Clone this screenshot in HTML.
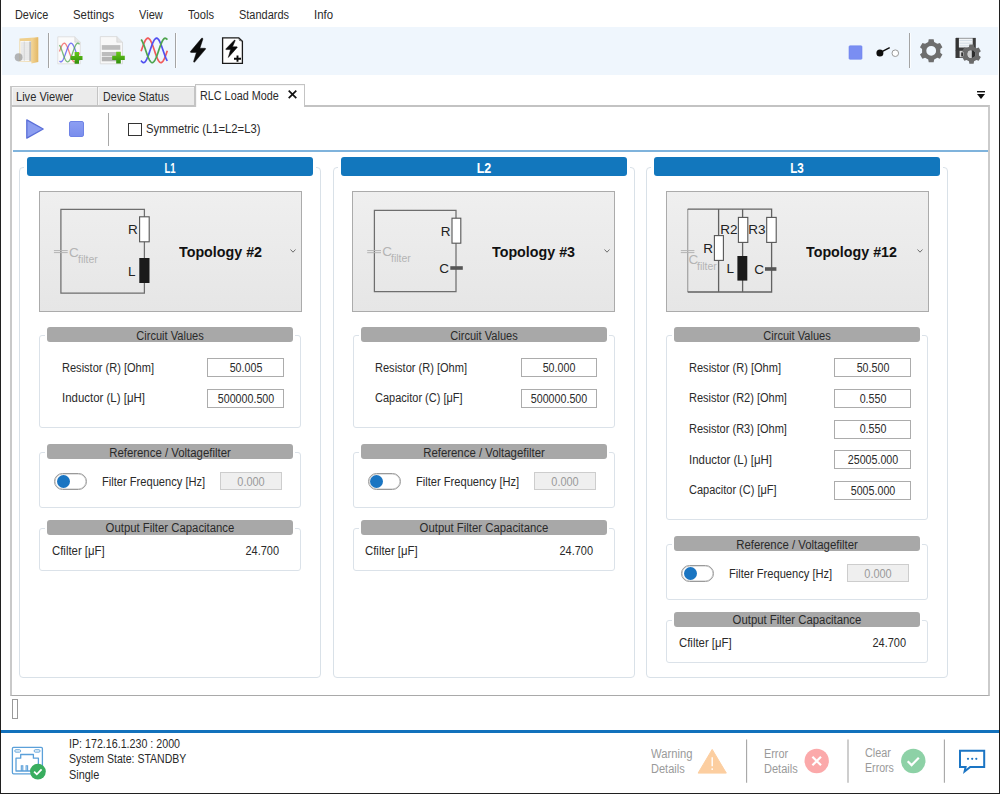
<!DOCTYPE html>
<html><head><meta charset="utf-8"><style>
*{box-sizing:border-box;margin:0;padding:0}
html,body{width:1000px;height:794px;overflow:hidden;background:#fff}
body{position:relative;font-family:"Liberation Sans",sans-serif;font-size:12px;color:#2a2a2a}
.a{position:absolute}
.t{position:absolute;white-space:nowrap;line-height:1}
.tab{position:absolute;border:1px solid #c4c4c4;border-bottom:none;background:#ebebeb;box-shadow:inset 1px 1px 0 #f6f6f6}
.hdr{position:absolute;height:19px;background:#1277bd;border-radius:3px;box-shadow:0 0 0 3px #fff}
.grp{position:absolute;border:1px solid #d9e1e8;border-radius:4px}
.topo{position:absolute;border:1px solid #ababab;background:linear-gradient(#efefef,#e6e6e6)}
.ghdr{position:absolute;height:15px;background:#a8a8a8;border-radius:3px;box-shadow:0 0 0 2px #fff}
.sgrp{position:absolute;border:1px solid #dbe2e9;border-radius:3px}
.tb{position:absolute;height:19px;border:1px solid #acacac;background:#fff}
.tbd{background:#efefef;border-color:#cdcdcd}
.sw{position:absolute;width:33px;height:17px;border:1px solid #9a9a9a;border-radius:9px;background:#fff;box-shadow:inset 0 0 0 0.6px #c4c4c4}
.knob{position:absolute;left:1.6px;top:1.4px;width:13px;height:13px;border-radius:50%;background:#1a75c2}
svg{position:absolute;overflow:visible}
.sch text{font-family:"Liberation Sans",sans-serif}
</style></head><body>
<div class="a" style="left:0;top:0;width:1px;height:794px;background:#202020"></div>
<div class="a" style="left:999px;top:0;width:1px;height:794px;background:#202020"></div>
<div class="a" style="left:0;top:793px;width:1000px;height:1px;background:#202020"></div>
<div class="t" style="top:8.84px;font-size:12px;left:14.75px;transform:scaleX(0.9048);transform-origin:0 0;">Device</div>
<div class="t" style="top:8.84px;font-size:12px;left:73.00px;transform:scaleX(0.9480);transform-origin:0 0;">Settings</div>
<div class="t" style="top:8.84px;font-size:12px;left:139.00px;transform:scaleX(0.9231);transform-origin:0 0;">View</div>
<div class="t" style="top:8.84px;font-size:12px;left:188.00px;transform:scaleX(0.9286);transform-origin:0 0;">Tools</div>
<div class="t" style="top:8.84px;font-size:12px;left:239.00px;transform:scaleX(0.9132);transform-origin:0 0;">Standards</div>
<div class="t" style="top:8.84px;font-size:12px;left:314.00px;transform:scaleX(0.9500);transform-origin:0 0;">Info</div>
<div class="a" style="left:2px;top:27px;width:996px;height:48px;background:#eff6fd"></div>
<div class="a" style="left:48px;top:33px;width:1px;height:35px;background:#a4a4a4"></div>
<div class="a" style="left:49px;top:33px;width:1px;height:35px;background:#fbfdff"></div>
<div class="a" style="left:175px;top:33px;width:1px;height:35px;background:#a4a4a4"></div>
<div class="a" style="left:176px;top:33px;width:1px;height:35px;background:#fbfdff"></div>
<div class="a" style="left:909px;top:33px;width:1px;height:35px;background:#a4a4a4"></div>
<div class="a" style="left:910px;top:33px;width:1px;height:35px;background:#fbfdff"></div>
<svg style="left:0;top:0" width="1" height="1"><defs><linearGradient id="fg" x1="0" y1="0" x2="1" y2="0"><stop offset="0" stop-color="#f3d597"/><stop offset="1" stop-color="#e3b866"/></linearGradient><linearGradient id="pl" x1="0" y1="0" x2="0" y2="1"><stop offset="0" stop-color="#68c81a"/><stop offset="1" stop-color="#2f8e0c"/></linearGradient></defs><path d="M19.5 38.6 L38.2 37.2 V62 L19.5 61.4Z" fill="#efcf8c"/><path d="M20.2 41 H31.2 V61.2 H20.2Z" fill="#f7f7f7"/><path d="M21 43.0H30.5M21 45.0H30.5M21 47.0H30.5M21 49.0H30.5M21 51.0H30.5M21 53.0H30.5M21 55.0H30.5M21 57.0H30.5M21 59.0H30.5" stroke="#d6d6d6" stroke-width="0.8"/><path d="M24.3 41.5V60.8" stroke="#d0d0d0" stroke-width="0.8"/><rect x="29.3" y="41.5" width="2" height="19.5" fill="#a9a9a9" opacity="0.7"/><path d="M31.4 38.4 L38.2 37.2 V62 L31.4 63.4Z" fill="url(#fg)"/><ellipse cx="18.6" cy="57.3" rx="3.9" ry="4.1" fill="#9e9e9e" opacity="0.75"/><path d="M57.8 36.8 H74.8 L80.3 42.2 V63.8 H57.8Z" fill="#fbfbfb" stroke="#dadada" stroke-width="0.8"/><path d="M74.8 36.8 V42.2 H80.3" fill="#e6e6e6" stroke="#d0d0d0" stroke-width="0.6"/><path d="M59.50 51.50 L59.83 50.56 L60.17 49.64 L60.50 48.74 L60.83 47.89 L61.17 47.09 L61.50 46.34 L61.83 45.66 L62.17 45.05 L62.50 44.52 L62.83 44.07 L63.17 43.71 L63.50 43.45 L63.83 43.28 L64.17 43.20 L64.50 43.23 L64.83 43.35 L65.17 43.57 L65.50 43.88 L65.83 44.28 L66.17 44.77 L66.50 45.35 L66.83 45.99 L67.17 46.71 L67.50 47.48 L67.83 48.31 L68.17 49.19 L68.50 50.09 L68.83 51.03 L69.17 51.98 L69.50 52.93 L69.83 53.88 L70.17 54.81 L70.50 55.73 L70.83 56.60 L71.17 57.44 L71.50 58.22 L71.83 58.94 L72.17 59.59 L72.50 60.17 L72.83 60.67 L73.17 61.08 L73.50 61.40 L73.83 61.63 L74.17 61.76 L74.50 61.80 L74.83 61.74 L75.17 61.57 L75.50 61.32 L75.83 60.97 L76.17 60.53 L76.50 60.01 L76.83 59.40 L77.17 58.73 L77.50 57.99 L77.83 57.19 L78.17 56.34 L78.50 55.46 L78.83 54.54 L79.17 53.60 L79.50 52.64" fill="none" stroke="#f25a5a" stroke-width="1.3" opacity="0.75"/><path d="M59.50 61.01 L59.83 61.35 L60.17 61.59 L60.50 61.75 L60.83 61.80 L61.17 61.76 L61.50 61.61 L61.83 61.38 L62.17 61.05 L62.50 60.62 L62.83 60.12 L63.17 59.53 L63.50 58.87 L63.83 58.14 L64.17 57.36 L64.50 56.52 L64.83 55.64 L65.17 54.72 L65.50 53.78 L65.83 52.83 L66.17 51.88 L66.50 50.93 L66.83 50.00 L67.17 49.10 L67.50 48.23 L67.83 47.40 L68.17 46.63 L68.50 45.92 L68.83 45.28 L69.17 44.72 L69.50 44.24 L69.83 43.85 L70.17 43.54 L70.50 43.33 L70.83 43.22 L71.17 43.21 L71.50 43.29 L71.83 43.47 L72.17 43.74 L72.50 44.11 L72.83 44.57 L73.17 45.11 L73.50 45.72 L73.83 46.41 L74.17 47.17 L74.50 47.97 L74.83 48.83 L75.17 49.73 L75.50 50.65 L75.83 51.59 L76.17 52.55 L76.50 53.50 L76.83 54.44 L77.17 55.36 L77.50 56.26 L77.83 57.11 L78.17 57.91 L78.50 58.66 L78.83 59.34 L79.17 59.95 L79.50 60.48" fill="none" stroke="#5050f0" stroke-width="1.3" opacity="0.75"/><path d="M59.50 44.99 L59.83 45.60 L60.17 46.27 L60.50 47.01 L60.83 47.81 L61.17 48.66 L61.50 49.54 L61.83 50.46 L62.17 51.40 L62.50 52.36 L62.83 53.31 L63.17 54.26 L63.50 55.18 L63.83 56.08 L64.17 56.94 L64.50 57.76 L64.83 58.51 L65.17 59.21 L65.50 59.83 L65.83 60.38 L66.17 60.85 L66.50 61.22 L66.83 61.51 L67.17 61.70 L67.50 61.79 L67.83 61.79 L68.17 61.68 L68.50 61.48 L68.83 61.19 L69.17 60.80 L69.50 60.33 L69.83 59.78 L70.17 59.14 L70.50 58.44 L70.83 57.68 L71.17 56.86 L71.50 55.99 L71.83 55.09 L72.17 54.16 L72.50 53.22 L72.83 52.26 L73.17 51.31 L73.50 50.37 L73.83 49.45 L74.17 48.57 L74.50 47.73 L74.83 46.93 L75.17 46.20 L75.50 45.53 L75.83 44.94 L76.17 44.42 L76.50 43.99 L76.83 43.65 L77.17 43.41 L77.50 43.25 L77.83 43.20 L78.17 43.24 L78.50 43.39 L78.83 43.62 L79.17 43.95 L79.50 44.38" fill="none" stroke="#4ea44e" stroke-width="1.3" opacity="0.75"/><path d="M74.6 52 H79 V56 H82.5 V60 H79 V63.8 H74.6 V60 H70.8 V56 H74.6Z" fill="url(#pl)"/><path d="M100.3 36.6 H116.8 L122.5 42.2 V63.8 H100.3Z" fill="#f8f8f8" stroke="#d6d6d6" stroke-width="0.8"/><path d="M116.8 36.6 V42.2 H122.5" fill="#e4e4e4" stroke="#cfcfcf" stroke-width="0.6"/><rect x="101.8" y="45.1" width="18.5" height="4.7" fill="#bdbdbd"/><rect x="101.8" y="52" width="18.5" height="4.3" fill="#bdbdbd"/><rect x="101.8" y="57" width="18.5" height="4.3" fill="#b5b5b5"/><path d="M116.2 51.8 H120.8 V55.8 H124.8 V59.9 H120.8 V63.6 H116.2 V59.9 H112.2 V55.8 H116.2Z" fill="url(#pl)"/><path d="M141.10 51.28 L141.54 50.00 L141.97 48.72 L142.41 47.45 L142.85 46.22 L143.28 45.04 L143.72 43.91 L144.16 42.86 L144.59 41.89 L145.03 41.02 L145.47 40.25 L145.90 39.59 L146.34 39.06 L146.78 38.65 L147.21 38.37 L147.65 38.22 L148.09 38.21 L148.52 38.34 L148.96 38.60 L149.40 38.99 L149.83 39.51 L150.27 40.15 L150.71 40.90 L151.14 41.76 L151.58 42.71 L152.02 43.76 L152.45 44.87 L152.89 46.05 L153.33 47.27 L153.76 48.53 L154.20 49.81 L154.64 51.10 L155.07 52.38 L155.51 53.63 L155.95 54.85 L156.38 56.03 L156.82 57.13 L157.26 58.17 L157.69 59.12 L158.13 59.97 L158.57 60.71 L159.00 61.34 L159.44 61.85 L159.88 62.23 L160.31 62.48 L160.75 62.59 L161.19 62.57 L161.62 62.41 L162.06 62.12 L162.50 61.70 L162.93 61.16 L163.37 60.49 L163.81 59.71 L164.24 58.83 L164.68 57.85 L165.12 56.80 L165.55 55.67 L165.99 54.48 L166.43 53.24 L166.86 51.98 L167.30 50.69" fill="none" stroke="#f25a5a" stroke-width="1.7" opacity="1.0"/><path d="M141.10 60.50 L141.54 61.16 L141.97 61.71 L142.41 62.13 L142.85 62.42 L143.28 62.57 L143.72 62.59 L144.16 62.48 L144.59 62.23 L145.03 61.85 L145.47 61.34 L145.90 60.71 L146.34 59.96 L146.78 59.11 L147.21 58.16 L147.65 57.13 L148.09 56.02 L148.52 54.85 L148.96 53.62 L149.40 52.37 L149.83 51.09 L150.27 49.80 L150.71 48.52 L151.14 47.26 L151.58 46.04 L152.02 44.86 L152.45 43.75 L152.89 42.71 L153.33 41.75 L153.76 40.89 L154.20 40.14 L154.64 39.50 L155.07 38.99 L155.51 38.60 L155.95 38.34 L156.38 38.21 L156.82 38.22 L157.26 38.37 L157.69 38.65 L158.13 39.06 L158.57 39.60 L159.00 40.25 L159.44 41.02 L159.88 41.90 L160.31 42.87 L160.75 43.92 L161.19 45.05 L161.62 46.23 L162.06 47.46 L162.50 48.72 L162.93 50.01 L163.37 51.29 L163.81 52.57 L164.24 53.82 L164.68 55.04 L165.12 56.20 L165.55 57.30 L165.99 58.32 L166.43 59.25 L166.86 60.09 L167.30 60.82" fill="none" stroke="#5050f0" stroke-width="1.7" opacity="1.0"/><path d="M141.10 39.42 L141.54 40.04 L141.97 40.78 L142.41 41.62 L142.85 42.56 L143.28 43.59 L143.72 44.70 L144.16 45.86 L144.59 47.08 L145.03 48.34 L145.47 49.61 L145.90 50.90 L146.34 52.18 L146.78 53.44 L147.21 54.67 L147.65 55.85 L148.09 56.97 L148.52 58.02 L148.96 58.98 L149.40 59.84 L149.83 60.60 L150.27 61.25 L150.71 61.78 L151.14 62.18 L151.58 62.45 L152.02 62.58 L152.45 62.58 L152.89 62.45 L153.33 62.18 L153.76 61.78 L154.20 61.25 L154.64 60.60 L155.07 59.84 L155.51 58.97 L155.95 58.01 L156.38 56.96 L156.82 55.84 L157.26 54.66 L157.69 53.43 L158.13 52.17 L158.57 50.89 L159.00 49.60 L159.44 48.33 L159.88 47.07 L160.31 45.85 L160.75 44.69 L161.19 43.58 L161.62 42.56 L162.06 41.61 L162.50 40.77 L162.93 40.04 L163.37 39.42 L163.81 38.92 L164.24 38.55 L164.68 38.31 L165.12 38.20 L165.55 38.24 L165.99 38.40 L166.43 38.70 L166.86 39.13 L167.30 39.69" fill="none" stroke="#4ea44e" stroke-width="1.7" opacity="1.0"/><path d="M201.6 38.2 L190.4 51.6 Q190.2 52.5 191.3 52.5 L196.4 52.4 L193.6 61.5 Q193.7 62.6 194.6 62.1 L205.6 49.1 Q205.9 48.3 205 48.3 L199.9 48.2 L202.9 39 Q202.6 37.5 201.6 38.2Z" fill="#0a0a0a" stroke="#0a0a0a" stroke-width="0.5" stroke-linejoin="round"/><path d="M222.6 37.8 H238.8 L242.4 41.2 V63.3 H222.6Z" fill="#fff" stroke="#1a1a1a" stroke-width="1.3"/><path d="M238.8 38 L239.5 40.5 L242.2 41" fill="none" stroke="#444" stroke-width="0.8"/><path d="M234.3 40.2 L225.8 49 Q225.7 49.6 226.3 49.6 L230.6 49.5 L228.3 57.5 L237.2 47.4 Q237.4 46.8 236.8 46.8 L232.5 46.8 L235.2 40.6 Q235 39.8 234.3 40.2Z" fill="#0a0a0a" stroke="#0a0a0a" stroke-width="0.5" stroke-linejoin="round"/><path d="M234 58.8 H241 M237.5 55.4 V61.8" stroke="#0a0a0a" stroke-width="1.9"/><rect x="849" y="45.8" width="13" height="13.5" rx="1" fill="#7a8ef2" stroke="#6f84ee" stroke-width="0.6"/><circle cx="879.9" cy="52.9" r="3.5" fill="#0d0d0d"/><path d="M880.5 52.3 L889.7 47.6" stroke="#0d0d0d" stroke-width="1.5"/><circle cx="895.3" cy="53.2" r="3.3" fill="#fff" stroke="#9a9a9a" stroke-width="1"/><path d="M934.17 41.99 L933.66 39.26 L928.74 39.26 L928.23 41.99 L925.06 43.82 L922.44 42.90 L919.98 47.16 L922.08 48.97 L922.08 52.63 L919.98 54.44 L922.44 58.70 L925.06 57.78 L928.23 59.61 L928.74 62.34 L933.66 62.34 L934.17 59.61 L937.34 57.78 L939.96 58.70 L942.42 54.44 L940.32 52.63 L940.32 48.97 L942.42 47.16 L939.96 42.90 L937.34 43.82Z M936.10 50.80 A4.9 4.9 0 1 0 926.30 50.80 A4.9 4.9 0 1 0 936.10 50.80Z" fill="#6e6e6e" fill-rule="evenodd"/><path d="M955.7 37.9 H975.8 V50.6 H955.7Z" fill="#3c3c3c"/><path d="M955.7 37.9 H958.9 V58 H955.7Z" fill="#333"/><path d="M955.7 50 H966 V58 H955.7Z" fill="#3a3a3a"/><rect x="958.9" y="38.4" width="13.8" height="9.1" fill="#f1f4f7"/><path d="M959.5 40.5H972 M959.5 43.2H972 M959.5 45.8H972" stroke="#c9d4de" stroke-width="0.7"/><rect x="959.6" y="50.8" width="4.6" height="6.5" fill="#d6d6d6"/><rect x="961.2" y="52.4" width="2.2" height="4" fill="#333"/><path d="M974.04 46.94 L973.64 44.54 L969.36 44.54 L968.96 46.94 L966.57 48.32 L964.29 47.47 L962.15 51.17 L964.03 52.72 L964.03 55.48 L962.15 57.03 L964.29 60.73 L966.57 59.88 L968.96 61.26 L969.36 63.66 L973.64 63.66 L974.04 61.26 L976.43 59.88 L978.71 60.73 L980.85 57.03 L978.97 55.48 L978.97 52.72 L980.85 51.17 L978.71 47.47 L976.43 48.32Z M975.40 54.10 A3.9 3.9 0 1 0 967.60 54.10 A3.9 3.9 0 1 0 975.40 54.10Z" fill="#6a6a6a" fill-rule="evenodd"/><path d="M971.5 50.2 A3.9 3.9 0 0 1 971.5 58 Z" fill="#2c2c2c"/><path d="M971.5 50.2 A3.9 3.9 0 0 0 971.5 58 Z" fill="#cfcfcf"/></svg>
<div class="tab" style="left:10px;top:86px;width:88px;height:20px;border-left:2px solid #c8c8c8"></div>
<div class="tab" style="left:97px;top:86px;width:98px;height:20px"></div>
<div class="a" style="left:10px;top:105px;width:980px;height:591px;border-style:solid;border-color:#c3c3c3 #cbcbcb #a9a9a9 #c9c9c9;border-width:2px 2px 1px 2px;background:#fff"></div>
<div class="tab" style="left:195px;top:84px;width:110px;height:23px;background:#fff"></div>
<div class="t" style="top:90.84px;font-size:12px;left:16.00px;transform:scaleX(0.9231);transform-origin:0 0;">Live Viewer</div>
<div class="t" style="top:90.74px;font-size:12px;left:103.20px;transform:scaleX(0.8919);transform-origin:0 0;">Device Status</div>
<div class="t" style="top:90.04px;font-size:12px;left:200.00px;transform:scaleX(0.9006);transform-origin:0 0;">RLC Load Mode</div>
<svg style="left:288px;top:90px" width="9" height="9" viewBox="0 0 9 9"><path d="M0.7 0.7L8.3 8.1M8.3 0.7L0.7 8.1" stroke="#111" stroke-width="1.7"/></svg>
<svg style="left:977px;top:91px" width="8" height="8" viewBox="0 0 8 8"><rect x="0" y="0" width="8" height="1.4" fill="#111"/><path d="M0 3L8 3L4 8Z" fill="#111"/></svg>
<svg style="left:26px;top:119px" width="18" height="20" viewBox="0 0 18 20"><path d="M0.8 0.9L17.2 10L0.8 19.1Z" fill="#8c9ef0" stroke="#5a6ed8" stroke-width="1.3" stroke-linejoin="round"/></svg>
<div class="a" style="left:69.4px;top:121.4px;width:15px;height:15.4px;border-radius:2px;background:linear-gradient(#8c9ef2,#7a8eed);border:1px solid #6f83e6"></div>
<div class="a" style="left:107.5px;top:113px;width:1px;height:33px;background:#a8a8a8"></div>
<div class="a" style="left:128px;top:122.5px;width:14px;height:13px;border:1px solid #333;background:#fff"></div>
<div class="t" style="top:123.04px;font-size:12px;left:146.30px;transform:scaleX(0.9377);transform-origin:0 0;">Symmetric (L1=L2=L3)</div>
<div class="a" style="left:13px;top:150px;width:975px;height:2px;background:#7fb3dc"></div>
<div class="grp" style="left:19px;top:167px;width:302px;height:510.5px"></div>
<div class="hdr" style="left:27px;top:157px;width:286px"></div>
<div class="t" style="top:160.95px;font-size:14px;color:#fff;font-weight:bold;left:-29.60px;width:400px;text-align:center;transform:scaleX(0.6857);transform-origin:50% 0;">L1</div>
<div class="topo" style="left:38.5px;top:191px;width:263px;height:120.5px"></div>
<svg class="sch" style="left:0;top:0" width="1" height="1">
<path d="M144.4 209.3H60.9V293H144.4Z" fill="none" stroke="#6e6e6e" stroke-width="1.25"/>
<rect x="139.6" y="216.8" width="9.6" height="25" fill="#fff" stroke="#555" stroke-width="1.1"/>
<rect x="139.3" y="258" width="10.2" height="25" fill="#1a1a1a"/>
<path d="M53.9 250.6H67.7M53.9 252.6H67.7" stroke="#b4b4b4" stroke-width="1"/>
<text x="128" y="234" font-size="13.5" fill="#222">R</text>
<text x="128" y="275.5" font-size="13.5" fill="#222">L</text>
<text x="69" y="256.5" font-size="13.5" fill="#b4b4b4">C</text>
<text x="78" y="262.5" font-size="10.5" fill="#b4b4b4">filter</text>
</svg>
<div class="t" style="top:243.60px;font-size:15px;color:#111;font-weight:bold;left:178.70px;transform:scaleX(0.9520);transform-origin:0 0;">Topology #2</div>
<svg style="left:290.3px;top:249px" width="6" height="4" viewBox="0 0 6 4"><path d="M0.5 0.5L3 3.2L5.5 0.5" fill="none" stroke="#6e6e6e" stroke-width="1"/></svg>
<div class="sgrp" style="left:39px;top:335px;width:262px;height:92.50px"></div>
<div class="ghdr" style="left:47px;top:327.3px;width:246px"></div>
<div class="t" style="top:329.94px;font-size:12px;left:-29.80px;width:400px;text-align:center;transform:scaleX(0.9229);transform-origin:50% 0;">Circuit Values</div>
<div class="t" style="top:361.64px;font-size:12px;left:61.50px;transform:scaleX(0.9200);transform-origin:0 0;">Resistor (R) [Ohm]</div>
<div class="tb" style="left:207.4px;top:358.20px;width:76.5px"></div>
<div class="t" style="top:361.84px;font-size:12px;left:45.60px;width:400px;text-align:center;transform:scaleX(0.8900);transform-origin:50% 0;">50.005</div>
<div class="t" style="top:392.31px;font-size:12px;left:61.50px;transform:scaleX(0.9540);transform-origin:0 0;">Inductor (L) [μH]</div>
<div class="tb" style="left:207.4px;top:388.87px;width:76.5px"></div>
<div class="t" style="top:392.51px;font-size:12px;left:45.60px;width:400px;text-align:center;transform:scaleX(0.8900);transform-origin:50% 0;">500000.500</div>
<div class="sgrp" style="left:39px;top:452.00px;width:262px;height:55.5px"></div>
<div class="ghdr" style="left:47px;top:444.30px;width:246px"></div>
<div class="t" style="top:446.94px;font-size:12px;left:-29.80px;width:400px;text-align:center;transform:scaleX(0.9500);transform-origin:50% 0;">Reference / Voltagefilter</div>
<div class="sw" style="left:54px;top:472.60px"><div class="knob"></div></div>
<div class="t" style="top:476.44px;font-size:12px;left:102.00px;transform:scaleX(0.9265);transform-origin:0 0;">Filter Frequency [Hz]</div>
<div class="tb tbd" style="left:220px;top:472.30px;width:62px;height:18px"></div>
<div class="t" style="top:476.44px;font-size:12px;color:#9a9a9a;left:51.00px;width:400px;text-align:center;transform:scaleX(0.9133);transform-origin:50% 0;">0.000</div>
<div class="sgrp" style="left:39px;top:528.00px;width:262px;height:42.5px"></div>
<div class="ghdr" style="left:47px;top:520.20px;width:246px"></div>
<div class="t" style="top:521.94px;font-size:12px;left:-29.80px;width:400px;text-align:center;transform:scaleX(0.9463);transform-origin:50% 0;">Output Filter Capacitance</div>
<div class="t" style="top:545.14px;font-size:12px;left:51.80px;transform:scaleX(0.9477);transform-origin:0 0;">Cfilter [μF]</div>
<div class="t" style="top:545.14px;font-size:12px;left:-120.80px;width:400px;text-align:right;transform:scaleX(0.9143);transform-origin:100% 0;">24.700</div>
<div class="grp" style="left:333px;top:167px;width:302px;height:510.5px"></div>
<div class="hdr" style="left:340.5px;top:157px;width:286px"></div>
<div class="t" style="top:160.95px;font-size:14px;color:#fff;font-weight:bold;left:283.90px;width:400px;text-align:center;transform:scaleX(0.8939);transform-origin:50% 0;">L2</div>
<div class="topo" style="left:352.0px;top:191px;width:263px;height:120.5px"></div>
<svg class="sch" style="left:0;top:0" width="1" height="1">
<path d="M456 210.4H374.4V291.7H456Z" fill="none" stroke="#6e6e6e" stroke-width="1.25"/>
<rect x="452" y="218.2" width="8.8" height="25" fill="#fff" stroke="#555" stroke-width="1.1"/>
<rect x="450.3" y="266.2" width="12.5" height="3.6" fill="#555"/>
<path d="M367.2 250.6H381M367.2 252.7H381" stroke="#b4b4b4" stroke-width="1"/>
<text x="440.7" y="235.5" font-size="13.5" fill="#222">R</text>
<text x="439.3" y="272.6" font-size="13.5" fill="#222">C</text>
<text x="382.2" y="255.8" font-size="13.5" fill="#b4b4b4">C</text>
<text x="391" y="262.3" font-size="10.5" fill="#b4b4b4">filter</text>
</svg>
<div class="t" style="top:243.60px;font-size:15px;color:#111;font-weight:bold;left:492.20px;transform:scaleX(0.9520);transform-origin:0 0;">Topology #3</div>
<svg style="left:603.8px;top:249px" width="6" height="4" viewBox="0 0 6 4"><path d="M0.5 0.5L3 3.2L5.5 0.5" fill="none" stroke="#6e6e6e" stroke-width="1"/></svg>
<div class="sgrp" style="left:353px;top:335px;width:262px;height:92.50px"></div>
<div class="ghdr" style="left:360.5px;top:327.3px;width:246px"></div>
<div class="t" style="top:329.94px;font-size:12px;left:283.70px;width:400px;text-align:center;transform:scaleX(0.9229);transform-origin:50% 0;">Circuit Values</div>
<div class="t" style="top:361.64px;font-size:12px;left:375.00px;transform:scaleX(0.9200);transform-origin:0 0;">Resistor (R) [Ohm]</div>
<div class="tb" style="left:520.9px;top:358.20px;width:76.5px"></div>
<div class="t" style="top:361.84px;font-size:12px;left:359.10px;width:400px;text-align:center;transform:scaleX(0.8900);transform-origin:50% 0;">50.000</div>
<div class="t" style="top:392.31px;font-size:12px;left:375.00px;transform:scaleX(0.9162);transform-origin:0 0;">Capacitor (C) [μF]</div>
<div class="tb" style="left:520.9px;top:388.87px;width:76.5px"></div>
<div class="t" style="top:392.51px;font-size:12px;left:359.10px;width:400px;text-align:center;transform:scaleX(0.8900);transform-origin:50% 0;">500000.500</div>
<div class="sgrp" style="left:353px;top:452.00px;width:262px;height:55.5px"></div>
<div class="ghdr" style="left:360.5px;top:444.30px;width:246px"></div>
<div class="t" style="top:446.94px;font-size:12px;left:283.70px;width:400px;text-align:center;transform:scaleX(0.9500);transform-origin:50% 0;">Reference / Voltagefilter</div>
<div class="sw" style="left:367.5px;top:472.60px"><div class="knob"></div></div>
<div class="t" style="top:476.44px;font-size:12px;left:415.50px;transform:scaleX(0.9265);transform-origin:0 0;">Filter Frequency [Hz]</div>
<div class="tb tbd" style="left:533.5px;top:472.30px;width:62px;height:18px"></div>
<div class="t" style="top:476.44px;font-size:12px;color:#9a9a9a;left:364.50px;width:400px;text-align:center;transform:scaleX(0.9133);transform-origin:50% 0;">0.000</div>
<div class="sgrp" style="left:353px;top:528.00px;width:262px;height:42.5px"></div>
<div class="ghdr" style="left:360.5px;top:520.20px;width:246px"></div>
<div class="t" style="top:521.94px;font-size:12px;left:283.70px;width:400px;text-align:center;transform:scaleX(0.9463);transform-origin:50% 0;">Output Filter Capacitance</div>
<div class="t" style="top:545.14px;font-size:12px;left:365.30px;transform:scaleX(0.9477);transform-origin:0 0;">Cfilter [μF]</div>
<div class="t" style="top:545.14px;font-size:12px;left:192.70px;width:400px;text-align:right;transform:scaleX(0.9143);transform-origin:100% 0;">24.700</div>
<div class="grp" style="left:646px;top:167px;width:302px;height:510.5px"></div>
<div class="hdr" style="left:654px;top:157px;width:286px"></div>
<div class="t" style="top:160.95px;font-size:14px;color:#fff;font-weight:bold;left:597.40px;width:400px;text-align:center;transform:scaleX(0.8327);transform-origin:50% 0;">L3</div>
<div class="topo" style="left:665.5px;top:191px;width:263px;height:120.5px"></div>
<svg class="sch" style="left:0;top:0" width="1" height="1">
<path d="M687.7 209.1V292" fill="none" stroke="#a6a6a6" stroke-width="1.3"/>
<path d="M687.7 209.1H771.6V292H687.7 M718.6 209.1V292 M742.6 209.1V292" fill="none" stroke="#626262" stroke-width="1.3"/>
<rect x="714.4" y="235.6" width="9" height="24.8" fill="#fff" stroke="#555" stroke-width="1.1"/>
<rect x="738.4" y="217.4" width="9.4" height="25" fill="#fff" stroke="#555" stroke-width="1.1"/>
<rect x="737.4" y="256" width="9.9" height="24.6" fill="#1a1a1a"/>
<rect x="766.7" y="217.4" width="9.5" height="25" fill="#fff" stroke="#555" stroke-width="1.1"/>
<rect x="765" y="267.2" width="11.4" height="3.6" fill="#555"/>
<path d="M680.8 250.6H694.4M680.8 252.6H694.4" stroke="#b4b4b4" stroke-width="1"/>
<text x="703.3" y="252.5" font-size="13.5" fill="#222">R</text>
<text x="720.2" y="233.5" font-size="13.5" fill="#222">R2</text>
<text x="748.2" y="233.5" font-size="13.5" fill="#222">R3</text>
<text x="726.5" y="272.6" font-size="13.5" fill="#222">L</text>
<text x="754.2" y="273.7" font-size="13.5" fill="#222">C</text>
<text x="688.4" y="263.6" font-size="13.5" fill="#b4b4b4">C</text>
<text x="697" y="269.8" font-size="10.5" fill="#b4b4b4">filter</text>
</svg>
<div class="t" style="top:243.60px;font-size:15px;color:#111;font-weight:bold;left:805.50px;transform:scaleX(0.9516);transform-origin:0 0;">Topology #12</div>
<svg style="left:917.3px;top:249px" width="6" height="4" viewBox="0 0 6 4"><path d="M0.5 0.5L3 3.2L5.5 0.5" fill="none" stroke="#6e6e6e" stroke-width="1"/></svg>
<div class="sgrp" style="left:666px;top:335px;width:262px;height:184.51px"></div>
<div class="ghdr" style="left:674px;top:327.3px;width:246px"></div>
<div class="t" style="top:329.94px;font-size:12px;left:597.20px;width:400px;text-align:center;transform:scaleX(0.9229);transform-origin:50% 0;">Circuit Values</div>
<div class="t" style="top:361.64px;font-size:12px;left:688.50px;transform:scaleX(0.9200);transform-origin:0 0;">Resistor (R) [Ohm]</div>
<div class="tb" style="left:834.4px;top:358.20px;width:76.5px"></div>
<div class="t" style="top:361.84px;font-size:12px;left:672.60px;width:400px;text-align:center;transform:scaleX(0.8900);transform-origin:50% 0;">50.500</div>
<div class="t" style="top:392.31px;font-size:12px;left:688.50px;transform:scaleX(0.9180);transform-origin:0 0;">Resistor (R2) [Ohm]</div>
<div class="tb" style="left:834.4px;top:388.87px;width:76.5px"></div>
<div class="t" style="top:392.51px;font-size:12px;left:672.60px;width:400px;text-align:center;transform:scaleX(0.8900);transform-origin:50% 0;">0.550</div>
<div class="t" style="top:422.98px;font-size:12px;left:688.50px;transform:scaleX(0.9180);transform-origin:0 0;">Resistor (R3) [Ohm]</div>
<div class="tb" style="left:834.4px;top:419.54px;width:76.5px"></div>
<div class="t" style="top:423.18px;font-size:12px;left:672.60px;width:400px;text-align:center;transform:scaleX(0.8900);transform-origin:50% 0;">0.550</div>
<div class="t" style="top:453.65px;font-size:12px;left:688.50px;transform:scaleX(0.9540);transform-origin:0 0;">Inductor (L) [μH]</div>
<div class="tb" style="left:834.4px;top:450.21px;width:76.5px"></div>
<div class="t" style="top:453.85px;font-size:12px;left:672.60px;width:400px;text-align:center;transform:scaleX(0.8900);transform-origin:50% 0;">25005.000</div>
<div class="t" style="top:484.32px;font-size:12px;left:688.50px;transform:scaleX(0.9162);transform-origin:0 0;">Capacitor (C) [μF]</div>
<div class="tb" style="left:834.4px;top:480.88px;width:76.5px"></div>
<div class="t" style="top:484.52px;font-size:12px;left:672.60px;width:400px;text-align:center;transform:scaleX(0.8900);transform-origin:50% 0;">5005.000</div>
<div class="sgrp" style="left:666px;top:544.01px;width:262px;height:55.5px"></div>
<div class="ghdr" style="left:674px;top:536.31px;width:246px"></div>
<div class="t" style="top:538.95px;font-size:12px;left:597.20px;width:400px;text-align:center;transform:scaleX(0.9500);transform-origin:50% 0;">Reference / Voltagefilter</div>
<div class="sw" style="left:681px;top:564.61px"><div class="knob"></div></div>
<div class="t" style="top:568.45px;font-size:12px;left:729.00px;transform:scaleX(0.9265);transform-origin:0 0;">Filter Frequency [Hz]</div>
<div class="tb tbd" style="left:847px;top:564.31px;width:62px;height:18px"></div>
<div class="t" style="top:568.45px;font-size:12px;color:#9a9a9a;left:678.00px;width:400px;text-align:center;transform:scaleX(0.9133);transform-origin:50% 0;">0.000</div>
<div class="sgrp" style="left:666px;top:620.01px;width:262px;height:42.5px"></div>
<div class="ghdr" style="left:674px;top:612.21px;width:246px"></div>
<div class="t" style="top:613.95px;font-size:12px;left:597.20px;width:400px;text-align:center;transform:scaleX(0.9463);transform-origin:50% 0;">Output Filter Capacitance</div>
<div class="t" style="top:637.15px;font-size:12px;left:678.80px;transform:scaleX(0.9477);transform-origin:0 0;">Cfilter [μF]</div>
<div class="t" style="top:637.15px;font-size:12px;left:506.20px;width:400px;text-align:right;transform:scaleX(0.9143);transform-origin:100% 0;">24.700</div>
<div class="a" style="left:12px;top:698.5px;width:6px;height:20px;border:1px solid #9a9a9a;background:#fff"></div>
<div class="a" style="left:1px;top:730px;width:998px;height:3px;background:#1271bc"></div>
<svg style="left:0;top:0" width="1" height="1"><rect x="12.4" y="747.4" width="30" height="26.4" rx="1.2" fill="none" stroke="#5ba0d9" stroke-width="1.3"/><rect x="14.8" y="749.8" width="5.8" height="2.3" rx="1" fill="none" stroke="#5ba0d9" stroke-width="1"/><rect x="34.2" y="749.8" width="5.8" height="2.3" rx="1" fill="none" stroke="#5ba0d9" stroke-width="1"/><path d="M16 771 V758.2 H20.7 V754.5 H33.4 V758.2 H38.4 V771Z" fill="none" stroke="#5ba0d9" stroke-width="1.3" stroke-linejoin="round"/><path d="M21.3 771 V765.8 H22.8 V771 M26.1 771 V765.8 H27.6 V771" fill="none" stroke="#5ba0d9" stroke-width="1.1"/><circle cx="37.9" cy="771.6" r="7.9" fill="#38ad5e"/><path d="M34.1 771.6 L36.8 774.3 L41.6 769.3" fill="none" stroke="#fff" stroke-width="1.8"/><path d="M712.2 749.4 L726.3 773.1 H698.1Z" fill="#fccea0" stroke="#fccea0" stroke-width="1" stroke-linejoin="round"/><path d="M712.2 757.3 V766.3 M712.2 768.2 V770" stroke="#fff" stroke-width="1.4"/><path d="M746.6 739.5 V782.7 M848 739.5 V782.7 M944.4 739.5 V782.7" stroke="#a6a6a6" stroke-width="1.1"/><circle cx="816.7" cy="761" r="12.2" fill="#fba9aa"/><path d="M812.4 756.7 L821 765.3 M821 756.7 L812.4 765.3" stroke="#fff" stroke-width="2.2"/><circle cx="913.3" cy="761" r="12.2" fill="#8dd1a6"/><path d="M907.7 761.2 L911.6 765.1 L918.8 757.7" fill="none" stroke="#fff" stroke-width="2.2"/><path d="M960 750.7 H984.2 V767 H970.2 L964.6 771.5 L965.6 767 H960Z" fill="none" stroke="#1b75c4" stroke-width="2" stroke-linejoin="miter"/><circle cx="968" cy="758.8" r="1.1" fill="#1b75c4"/><circle cx="972.2" cy="758.8" r="1.1" fill="#1b75c4"/><circle cx="976.3" cy="758.8" r="1.1" fill="#1b75c4"/></svg>
<div class="t" style="top:737.74px;font-size:12px;left:68.70px;transform:scaleX(0.8898);transform-origin:0 0;">IP: 172.16.1.230 : 2000</div>
<div class="t" style="top:753.14px;font-size:12px;left:68.70px;transform:scaleX(0.8770);transform-origin:0 0;">System State: STANDBY</div>
<div class="t" style="top:768.84px;font-size:12px;left:68.70px;transform:scaleX(0.9083);transform-origin:0 0;">Single</div>
<div class="t" style="top:747.84px;font-size:12px;color:#9a9a9a;left:650.80px;transform:scaleX(0.9356);transform-origin:0 0;">Warning</div>
<div class="t" style="top:762.64px;font-size:12px;color:#9a9a9a;left:650.80px;transform:scaleX(0.9197);transform-origin:0 0;">Details</div>
<div class="t" style="top:747.84px;font-size:12px;color:#9a9a9a;left:763.80px;transform:scaleX(0.9047);transform-origin:0 0;">Error</div>
<div class="t" style="top:762.64px;font-size:12px;color:#9a9a9a;left:763.80px;transform:scaleX(0.9197);transform-origin:0 0;">Details</div>
<div class="t" style="top:747.44px;font-size:12px;color:#9a9a9a;left:865.00px;transform:scaleX(0.9043);transform-origin:0 0;">Clear</div>
<div class="t" style="top:762.44px;font-size:12px;color:#9a9a9a;left:865.00px;transform:scaleX(0.8855);transform-origin:0 0;">Errors</div>
</body></html>
